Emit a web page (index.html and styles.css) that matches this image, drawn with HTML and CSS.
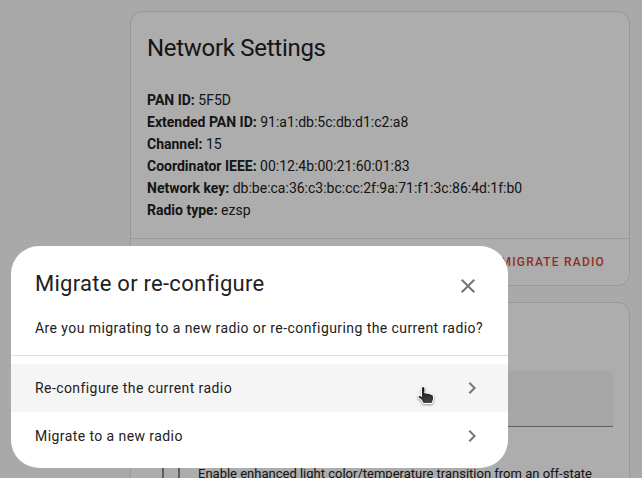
FILE: index.html
```
<!DOCTYPE html>
<html lang="en">
<head>
<meta charset="utf-8">
<title>Network Settings</title>
<link rel="stylesheet" href="styles.css">
</head>
<body>
<main class="page">
  <section class="card">
    <div class="card-content">
      <h1 class="card-title">Network Settings</h1>
      <div class="details">
        <div><strong>PAN ID:</strong> 5F5D</div>
        <div><strong>Extended PAN ID:</strong> 91:a1:db:5c:db:d1:c2:a8</div>
        <div><strong>Channel:</strong> 15</div>
        <div><strong>Coordinator IEEE:</strong> 00:12:4b:00:21:60:01:83</div>
        <div><strong>Network key:</strong> db:be:ca:36:c3:bc:cc:2f:9a:71:f1:3c:86:4d:1f:b0</div>
        <div><strong>Radio type:</strong> ezsp</div>
      </div>
    </div>
    <div class="card-actions">
      <button class="warning" type="button">Migrate radio</button>
    </div>
  </section>
  <section class="card options">
    <input class="field" type="text" aria-label="Option value">
    <div class="check-row">
      <input class="check" type="checkbox" id="transition">
      <label for="transition">Enable enhanced light color/temperature transition from an off-state</label>
    </div>
  </section>
</main>
<div class="scrim"></div>
<div class="dialog" role="dialog" aria-modal="true" aria-labelledby="dialog-title">
  <header class="dialog-header">
    <h2 class="dialog-title" id="dialog-title">Migrate or re-configure</h2>
    <button class="close" type="button" aria-label="Close">
      <svg width="24" height="24" viewBox="0 0 24 24" fill="currentColor"><path d="M19 6.41 17.59 5 12 10.59 6.41 5 5 6.41 10.59 12 5 17.59 6.41 19 12 13.41 17.59 19 19 17.59 13.41 12z"/></svg>
    </button>
  </header>
  <p class="dialog-text">Are you migrating to a new radio or re-configuring the current radio?</p>
  <div class="dialog-list">
    <button class="item hovered" type="button">
      <span>Re-configure the current radio</span>
      <svg width="24" height="24" viewBox="0 0 24 24" fill="currentColor"><path d="M8.59 16.58 13.17 12 8.59 7.41 10 6l6 6-6 6z"/></svg>
    </button>
    <button class="item" type="button">
      <span>Migrate to a new radio</span>
      <svg width="24" height="24" viewBox="0 0 24 24" fill="currentColor"><path d="M8.59 16.58 13.17 12 8.59 7.41 10 6l6 6-6 6z"/></svg>
    </button>
  </div>
  <svg class="pointer" width="20" height="22" viewBox="0 0 20 22">
    <defs><linearGradient id="hand" x1="0" y1="0" x2="0" y2="1"><stop offset="0" stop-color="#111"/><stop offset="1" stop-color="#444"/></linearGradient></defs>
    <path d="M5 3.5Q5 2 6.200 2T7.400 3.500V8.500Q9.500 7.600 10.500 9 12.500 8.300 13.500 9.700 16 9.300 16 12V14.500L14.500 18H6.500L4.500 14.500 1.700 12.500Q1 11 2.700 10.800L5 12z" fill="url(#hand)" stroke="#fff" stroke-width="2" stroke-linejoin="round" paint-order="stroke"/>
  </svg>
</div>
</body>
</html>
```
FILE: styles.css
```
* {
  box-sizing: border-box;
}

body {
  margin: 0;
  background: #fafafa;
  color: #212121;
  font: 14px/22px Roboto, sans-serif;
}

button {
  border: 0;
  background: none;
  font: inherit;
  color: inherit;
  padding: 0;
}

.page {
  display: flex;
  flex-direction: column;
  gap: 16px;
  height: 100vh;
  overflow: hidden;
  padding: 11px 12px 0 130px;
}

.card {
  flex: none;
  border: 1px solid #e0e0e0;
  border-radius: 12px;
  background: #fff;
}

.card-content {
  padding: 12px 16px 17px;
}

.card-title {
  margin: 0 0 17px;
  font-size: 24px;
  line-height: 48px;
  font-weight: 400;
  letter-spacing: -0.012em;
}

.card-actions {
  display: flex;
  justify-content: flex-end;
  border-top: 1px solid #e0e0e0;
  padding: 5px 16px;
}

.warning {
  height: 36px;
  padding: 0 8px;
  color: #db4437;
  font-weight: 500;
  font-size: 12px;
  letter-spacing: 0.1em;
  text-transform: uppercase;
}

.options {
  padding: 68px 16px 16px;
}

.field {
  display: block;
  width: 100%;
  height: 56px;
  border: 0;
  border-bottom: 1px solid #8c8c8c;
  border-radius: 4px 4px 0 0;
  background: #f5f5f5;
}

.check-row {
  display: flex;
  align-items: center;
  gap: 18px;
  margin-top: 36px;
  padding-left: 15px;
  font-size: 13px;
}

.check {
  appearance: none;
  flex: none;
  width: 18px;
  height: 18px;
  margin: 0;
  border: 2px solid #8a8a8a;
  border-radius: 2px;
}

.scrim {
  position: fixed;
  inset: 0;
  background: rgba(0, 0, 0, 0.32);
}

.dialog {
  position: fixed;
  left: 11px;
  right: 134px;
  bottom: 10px;
  padding-bottom: 8px;
  border-radius: 28px;
  background: #fff;
}

.dialog-header {
  display: flex;
  align-items: flex-start;
  justify-content: space-between;
  padding: 16px 16px 0 24px;
}

.dialog-title {
  margin: 0;
  font-size: 22px;
  line-height: 44px;
  font-weight: 400;
  letter-spacing: 0.012em;
}

.close {
  display: grid;
  place-items: center;
  width: 48px;
  height: 48px;
  color: #757575;
}

.dialog-text {
  margin: 0;
  padding: 7px 24px 16px;
  border-bottom: 1px solid #e0e0e0;
  letter-spacing: 0.03em;
}

.dialog-list {
  padding-top: 8px;
}

.item {
  display: flex;
  align-items: center;
  justify-content: space-between;
  width: 100%;
  height: 48px;
  padding: 0 24px;
  letter-spacing: 0.03em;
}

.item svg {
  color: #757575;
}

.hovered {
  background: #f5f5f5;
}

.pointer {
  position: absolute;
  right: 71px;
  bottom: 61px;
  filter: drop-shadow(0 1px 1px rgba(0, 0, 0, 0.4));
}
```
